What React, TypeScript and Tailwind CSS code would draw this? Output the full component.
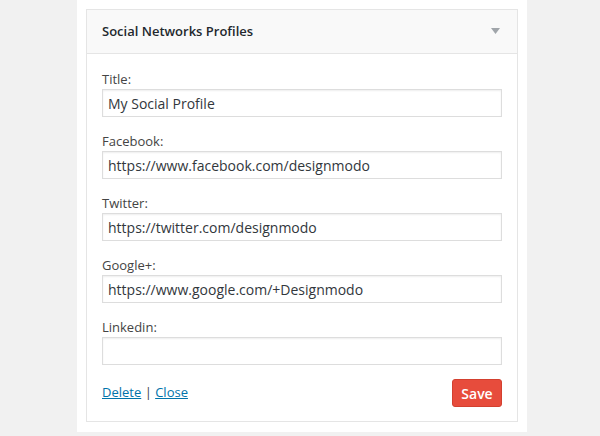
import React from "react";

const fields = [
  { label: "Title:", value: "My Social Profile" },
  { label: "Facebook:", value: "https://www.facebook.com/designmodo" },
  { label: "Twitter:", value: "https://twitter.com/designmodo" },
  { label: "Google+:", value: "https://www.google.com/+Designmodo" },
  { label: "Linkedin:", value: "" },
];

export default function App() {
  return (
    <div
      className="w-[600px] h-[436px] bg-[#f1f1f1] overflow-hidden"
      style={{ fontFamily: '"Open Sans", "Liberation Sans", sans-serif' }}
    >
      <div className="ml-[77px] w-[450px] h-[432px] bg-white pt-[9px] pl-[9px]">
        <div className="w-[432px] border border-[#e5e5e5] bg-white">
          <div className="h-[44px] bg-[#f9f9f9] border-b border-[#e5e5e5] flex items-center justify-between pl-[15px] pr-[17px]">
            <span className="text-[13px] font-semibold text-[#23282d] leading-none">
              Social Networks Profiles
            </span>
            <svg width="9" height="7" viewBox="0 0 9 7">
              <path d="M0 0 H9 L4.5 6 Z" fill="#a0a5aa" />
            </svg>
          </div>
          <div className="pl-[15px] pr-[15px] pt-[16px] pb-[14px]">
            <div className="flex flex-col gap-[15px]">
              {fields.map((f) => (
                <div key={f.label}>
                  <div className="text-[13px] leading-[18px] text-[#444] h-[19px]">{f.label}</div>
                  <div className="h-[28px] w-[400px] border border-[#dddddd] shadow-[inset_0_1px_2px_rgba(0,0,0,0.07)] flex items-center px-[5px] text-[14px] text-[#32373c]">
                    {f.value}
                  </div>
                </div>
              ))}
            </div>
            <div className="flex justify-between items-start w-[400px] mt-[14px]">
              <div className="text-[13px] text-[#0073aa] pt-[4px]">
                <span className="underline">Delete</span>
                <span className="text-[#444]"> | </span>
                <span className="underline">Close</span>
              </div>
              <div className="h-[28px] w-[50px] rounded-[3px] bg-[#e74c3c] border border-[#d3402f] flex items-center justify-center text-white text-[14px] font-semibold">
                Save
              </div>
            </div>
          </div>
        </div>
      </div>
    </div>
  );
}
